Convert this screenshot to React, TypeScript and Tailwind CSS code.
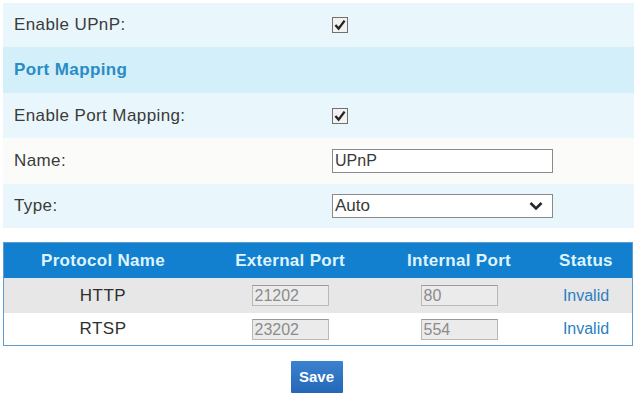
import React from 'react'

const font = { fontFamily: '"Liberation Sans", Arial, sans-serif' }

function CheckBox() {
  return (
    <svg width="16" height="16" viewBox="0 0 16 16" className="block">
      <rect x="0.5" y="0.5" width="15" height="15" fill="#f2f2f2" stroke="#707070" />
      <path d="M3.4 8 L6.6 11.6 L12.6 3.6" fill="none" stroke="#262626" strokeWidth="2.4" />
    </svg>
  )
}

function FormRow({ label, h, bg, children }: { label: string; h: string; bg: string; children?: React.ReactNode }) {
  return (
    <div className={`grid grid-cols-[329px_1fr] items-center ${h} ${bg}`}>
      <div className="pl-[11px] text-[17px] tracking-[0.4px] text-[#3b3b3b]">{label}</div>
      <div>{children}</div>
    </div>
  )
}

function PortInput({ value }: { value: string }) {
  return (
    <div className="w-[77px] h-[21px] border border-[#b9b9b9] border-t-[#9a9a9a] bg-[#ebebeb] pl-[2px] text-[16px] leading-[19px] text-[#8c8c8c]">
      {value}
    </div>
  )
}

const rows = [
  { name: 'HTTP', ext: '21202', int: '80', bg: 'bg-[#e7e7e7]', h: 'h-[35px]' },
  { name: 'RTSP', ext: '23202', int: '554', bg: 'bg-white', h: 'h-[32px]' },
]

export default function App() {
  return (
    <div style={font} className="w-[637px] h-[393px] bg-white pt-[3px] px-[3px] overflow-hidden">
      <div className="w-[631px]">
        <FormRow label="Enable UPnP:" h="h-[44px]" bg="bg-[#e9f7fc]">
          <CheckBox />
        </FormRow>
        <div className="h-[46px] flex items-center bg-[#d3effa] pl-[11px] text-[17px] tracking-[0.4px] font-bold text-[#2a8cc6]">
          Port Mapping
        </div>
        <FormRow label="Enable Port Mapping:" h="h-[45px]" bg="bg-[#e9f7fc]">
          <CheckBox />
        </FormRow>
        <FormRow label="Name:" h="h-[46px]" bg="bg-[#fbfcfa]">
          <div className="w-[221px] h-[24px] border border-[#8a8a8a] bg-white pl-[2px] text-[16px] leading-[22px] text-[#3a3a3a]">
            UPnP
          </div>
        </FormRow>
        <FormRow label="Type:" h="h-[44px]" bg="bg-[#e9f7fc]">
          <div className="w-[221px] h-[24px] border border-[#8a8a8a] bg-white pl-[2px] pr-[9px] flex items-center justify-between text-[17px] text-[#3a3a3a]">
            <span>Auto</span>
            <svg width="14" height="10" viewBox="0 0 14 10">
              <path d="M1.5 2 L7 7.5 L12.5 2" fill="none" stroke="#262626" strokeWidth="2.6" />
            </svg>
          </div>
        </FormRow>
      </div>

      <div className="mt-[14px] w-[630px] border border-[#5d9ccc]">
        <div className="grid grid-cols-[198px_176px_162px_1fr] h-[35px] items-center bg-[#1280cf] text-[17px] tracking-[0.3px] font-bold text-[#def4ff] text-center">
          <div>Protocol Name</div>
          <div>External Port</div>
          <div>Internal Port</div>
          <div>Status</div>
        </div>
        {rows.map((r) => (
          <div key={r.name} className={`grid grid-cols-[198px_176px_162px_1fr] items-center ${r.h} ${r.bg}`}>
            <div className="text-center text-[17px] tracking-[0.5px] text-[#2f2f2f]">{r.name}</div>
            <div className="flex justify-center">
              <PortInput value={r.ext} />
            </div>
            <div className="flex justify-center">
              <PortInput value={r.int} />
            </div>
            <div className="text-center text-[16px] text-[#2c7fc0]">Invalid</div>
          </div>
        ))}
      </div>

      <div className="flex justify-center mt-[15px] pr-[4px]">
        <button className="w-[52px] h-[32px] bg-gradient-to-b from-[#3b82cf] to-[#2467b8] text-white text-[15px] font-bold rounded-[1px]">
          Save
        </button>
      </div>
    </div>
  )
}
